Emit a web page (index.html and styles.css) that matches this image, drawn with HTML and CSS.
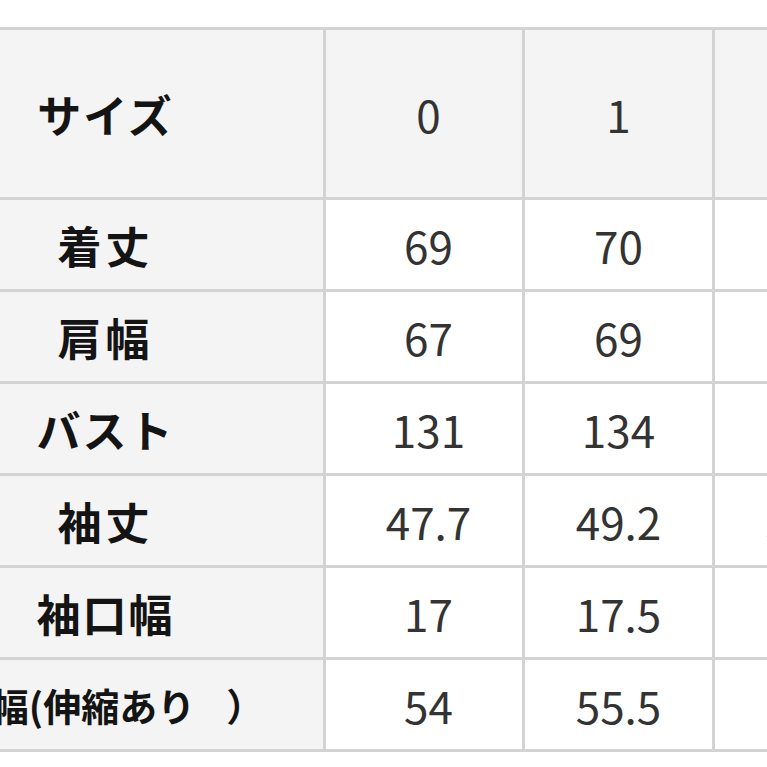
FILE: index.html
```html
<!DOCTYPE html>
<html lang="ja">
<head>
<meta charset="utf-8">
<title>サイズ表</title>
<link rel="stylesheet" href="styles.css">
</head>
<body>
<div class="viewport">
  <table class="size-table">
    <colgroup>
      <col class="col-label">
      <col class="col-first">
      <col class="col-size">
      <col class="col-size">
    </colgroup>
    <thead>
      <tr class="row-head">
        <th class="label">サイズ</th>
        <th class="num first">0</th>
        <th class="num">1</th>
        <th class="num">2</th>
      </tr>
    </thead>
    <tbody>
      <tr class="row">
        <th class="label wide">着丈</th>
        <td class="num first">69</td>
        <td class="num">70</td>
        <td class="num">71</td>
      </tr>
      <tr class="row">
        <th class="label wide">肩幅</th>
        <td class="num first">67</td>
        <td class="num">69</td>
        <td class="num">71</td>
      </tr>
      <tr class="row">
        <th class="label">バスト</th>
        <td class="num first">131</td>
        <td class="num">134</td>
        <td class="num">137</td>
      </tr>
      <tr class="row">
        <th class="label wide">袖丈</th>
        <td class="num first">47.7</td>
        <td class="num">49.2</td>
        <td class="num">50.7</td>
      </tr>
      <tr class="row">
        <th class="label">袖口幅</th>
        <td class="num first">17</td>
        <td class="num">17.5</td>
        <td class="num">18</td>
      </tr>
      <tr class="row">
        <th class="label long">裾幅(伸縮あり<span class="paren">）</span></th>
        <td class="num first">54</td>
        <td class="num">55.5</td>
        <td class="num">57</td>
      </tr>
    </tbody>
  </table>
</div>
</body>
</html>
```

FILE: styles.css
```css
html, body {
  margin: 0;
  padding: 0;
  background: #ffffff;
  overflow: hidden;
}

.viewport {
  width: 767px;
  height: 767px;
  overflow: hidden;
  background: #ffffff;
}

.size-table {
  margin: 27px 0 0 -115px;
  border-collapse: collapse;
  table-layout: fixed;
  width: 1017px;
  font-family: "Noto Sans CJK JP", "Noto Sans", sans-serif;
}

.col-label { width: 438px; }
.col-first { width: 199px; }
.col-size { width: 190px; }

.size-table th,
.size-table td {
  border: 3px solid #d3d3d3;
  padding: 0;
  text-align: center;
  vertical-align: middle;
}

.row-head { height: 170px; }
.row { height: 92px; }

.row-head th { background: #f4f4f4; }

.label {
  background: #f4f4f4;
  color: #141414;
  font-weight: 700;
  font-size: 44px;
  letter-spacing: 2px;
  white-space: nowrap;
}

.label.wide { letter-spacing: 4px; }

.size-table .label.long {
  font-size: 38px;
  letter-spacing: 0;
  padding-left: 6px;
}

.paren { margin-left: 31px; }

.num {
  background: #ffffff;
  color: #333333;
  font-weight: 400;
  font-size: 44px;
}

.size-table .num.first { padding-left: 9px; }
```
